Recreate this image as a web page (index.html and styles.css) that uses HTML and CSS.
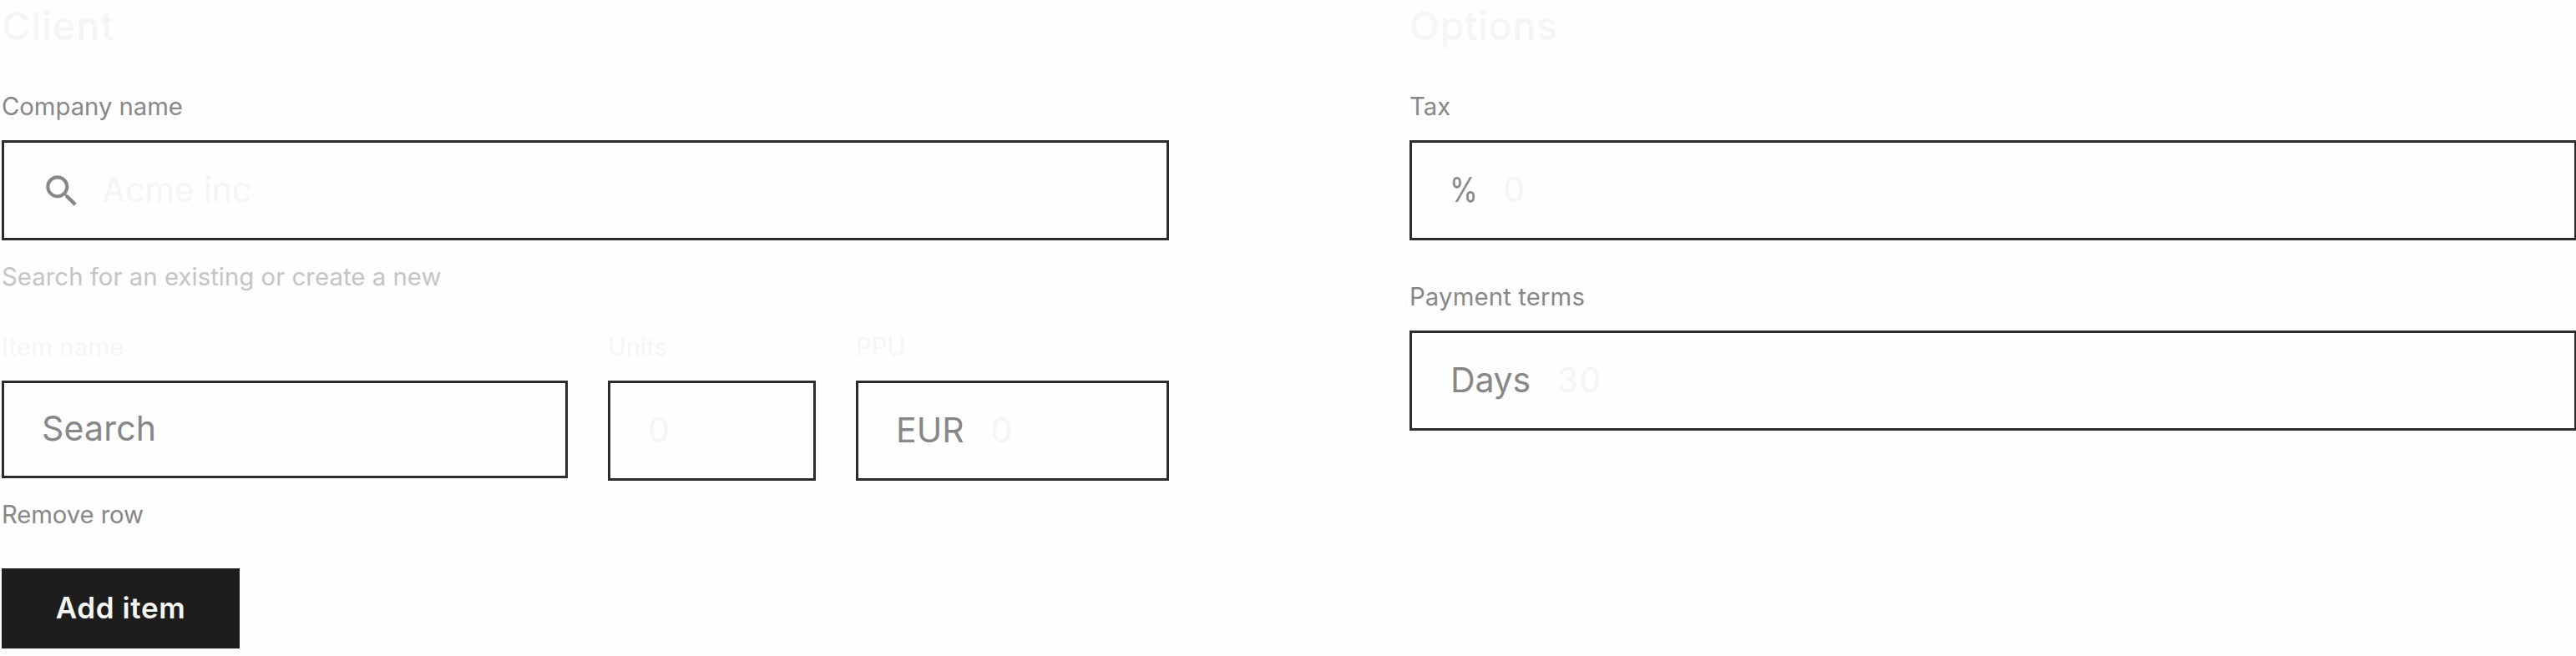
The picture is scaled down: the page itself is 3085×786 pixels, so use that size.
FILE: index.html
```
<!DOCTYPE html>
<html lang="en">
<head>
<meta charset="utf-8">
<title>Invoice form</title>
<link rel="stylesheet" href="styles.css">
</head>
<body>
<main class="form">
  <section class="column">
    <h2 class="heading client">Client</h2>
    <div class="field">
      <div class="label company">Company name</div>
      <div class="box">
        <svg class="icon" viewBox="0 0 24 24" fill="currentColor"><path d="M15.5 14h-.79l-.28-.27A6.471 6.471 0 0 0 16 9.5 6.5 6.5 0 1 0 9.5 16c1.61 0 3.09-.59 4.23-1.57l.27.28v.79l5 4.99L20.49 19l-4.99-5zm-6 0C7.01 14 5 11.99 5 9.5S7.01 5 9.5 5 14 7.01 14 9.5 11.99 14 9.5 14z"/></svg>
        <span class="placeholder acme">Acme inc</span>
      </div>
      <div class="help">Search for an existing or create a new</div>
    </div>
    <div class="row">
      <div class="field">
        <div class="label faint item-name">Item name</div>
        <div class="box short"><span class="value search">Search</span></div>
        <div class="remove">Remove row</div>
      </div>
      <div class="field">
        <div class="label faint">Units</div>
        <div class="box"><span class="placeholder">0</span></div>
      </div>
      <div class="field">
        <div class="label faint">PPU</div>
        <div class="box"><span class="value eur">EUR</span><span class="placeholder">0</span></div>
      </div>
    </div>
    <button class="button" type="button">Add item</button>
  </section>
  <section class="column">
    <h2 class="heading options">Options</h2>
    <div class="field">
      <div class="label">Tax</div>
      <div class="box"><span class="value percent">%</span><span class="placeholder">0</span></div>
    </div>
    <div class="field terms">
      <div class="label payment">Payment terms</div>
      <div class="box"><span class="value days">Days</span><span class="placeholder thirty">30</span></div>
    </div>
  </section>
</main>
</body>
</html>
```

FILE: styles.css
```
* { box-sizing: border-box; }
body {
  margin: 0;
  background: #fefefe;
  color: #878787;
  font-family: Inter, "Liberation Sans", sans-serif;
  overflow: hidden;
}
.form {
  display: grid;
  grid-template-columns: 1398px 1398px;
  column-gap: 288px;
  padding: 1px 0 0 2px;
}
.column { display: flex; flex-direction: column; align-items: stretch; }
.heading {
  margin: 0 0 48px;
  font-size: 47px;
  line-height: 60px;
  font-weight: 500;
  color: #f5f5f3;
}
.client { letter-spacing: 0.9px; }
.options { letter-spacing: 0.4px; }
.label, .help, .remove {
  padding-top: 1px;
  font-size: 29.3px;
  line-height: 35px;
  white-space: nowrap;
}
.label { margin-bottom: 23px; }
.company { letter-spacing: -0.05px; }
.item-name { letter-spacing: 0.15px; }
.payment { letter-spacing: 0.15px; }
.faint { color: #f5f5f3; }
.help { margin-top: 25px; color: #c4c4c4; letter-spacing: 0.05px; }
.remove { margin-top: 25px; letter-spacing: -0.1px; }
.box {
  display: flex;
  align-items: center;
  height: 120px;
  border: 3px solid #2c2c2c;
  padding: 0 45px 3px;
  font-size: 41px;
  line-height: 50px;
}
.short { height: 117px; }
.placeholder { color: #f5f5f3; }
.acme { letter-spacing: -0.2px; }
.icon { width: 50px; height: 50px; margin: 4px 23px 0 -1px; flex: none; }
.row {
  display: grid;
  grid-template-columns: 678px 249px 375px;
  column-gap: 48px;
  margin-top: 48px;
}
.value { margin-right: 32px; }
.search { letter-spacing: 0.2px; }
.percent { margin-right: 24px; transform: scaleX(0.84); transform-origin: left; }
.days { margin-left: 1px; letter-spacing: -0.2px; }
.thirty { letter-spacing: 1px; }
.terms { margin-top: 49px; }
.button {
  align-self: flex-start;
  width: 285px;
  height: 96px;
  margin-top: 47px;
  padding: 0 0 2px;
  border: 0;
  background: #1d1d1d;
  color: #f5f5f3;
  font: 600 35px/44px Inter, "Liberation Sans", sans-serif;
  letter-spacing: 0.6px;
}
```
